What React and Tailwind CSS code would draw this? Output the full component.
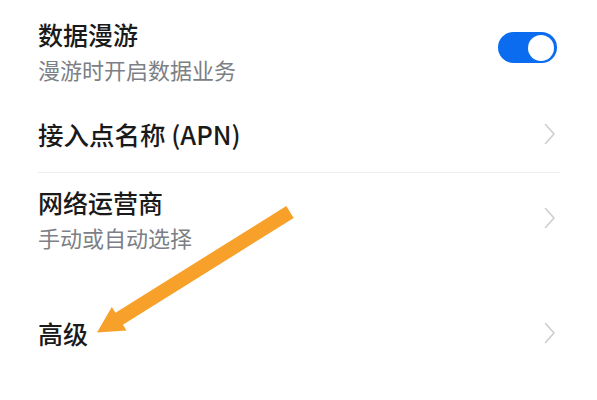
import React from "react";

const Chevron = () => (
  <svg width="12" height="22" viewBox="0 0 12 22" className="shrink-0">
    <path d="M1.5 1.5 L10 11 L1.5 20.5" fill="none" stroke="#cdcdcd" strokeWidth="1.6" strokeLinecap="round" strokeLinejoin="round" />
  </svg>
);

export default function App() {
  const font = { fontFamily: '"Noto Sans CJK SC", "Noto Sans", sans-serif' };
  return (
    <div className="relative w-[597px] h-[400px] bg-white overflow-hidden" style={font}>
      <div className="pl-[38px] pr-[40px]">
        {/* Row 1 */}
        <div className="flex items-start justify-between pt-[17px]">
          <div>
            <div className="text-[25px] leading-[34px] font-medium text-[#1a1a1a]">数据漫游</div>
            <div className="text-[22px] leading-[36px] text-[#7c8086]">漫游时开启数据业务</div>
          </div>
          <div className="mt-[15px] w-[59px] h-[31px] rounded-full bg-[#0b6cf0] flex items-center justify-end pr-[3px]">
            <div className="w-[26px] h-[26px] rounded-full bg-white" />
          </div>
        </div>
        {/* Row 2 */}
        <div className="flex items-center justify-between pt-[30px] pb-[21px]">
          <div className="text-[25.5px] leading-[34px] font-medium text-[#1a1a1a]">接入点名称 (APN)</div>
          <div className="mr-[1px]"><Chevron /></div>
        </div>
        <div className="h-px bg-[#ededed] mr-[-3px]" />
        {/* Row 3 */}
        <div className="flex items-center justify-between pt-[12px]">
          <div>
            <div className="text-[25px] leading-[34px] font-medium text-[#1a1a1a]">网络运营商</div>
            <div className="text-[22px] leading-[36px] text-[#7c8086]">手动或自动选择</div>
          </div>
          <div className="mr-[1px] -mt-[4px]"><Chevron /></div>
        </div>
        {/* Row 4 */}
        <div className="flex items-center justify-between pt-[61px]">
          <div className="text-[25px] leading-[34px] font-medium text-[#1a1a1a]">高级</div>
          <div className="mr-[1px]"><Chevron /></div>
        </div>
      </div>
      {/* Annotation arrow */}
      <svg className="absolute left-0 top-0 pointer-events-none" width="597" height="400" viewBox="0 0 597 400">
        <polygon
          points="97,332.5 126.6,330.6 122.9,324.8 293.7,218 286.3,206 115.5,312.7 111.8,306.9"
          fill="#f7a12b"
        />
      </svg>
    </div>
  );
}
